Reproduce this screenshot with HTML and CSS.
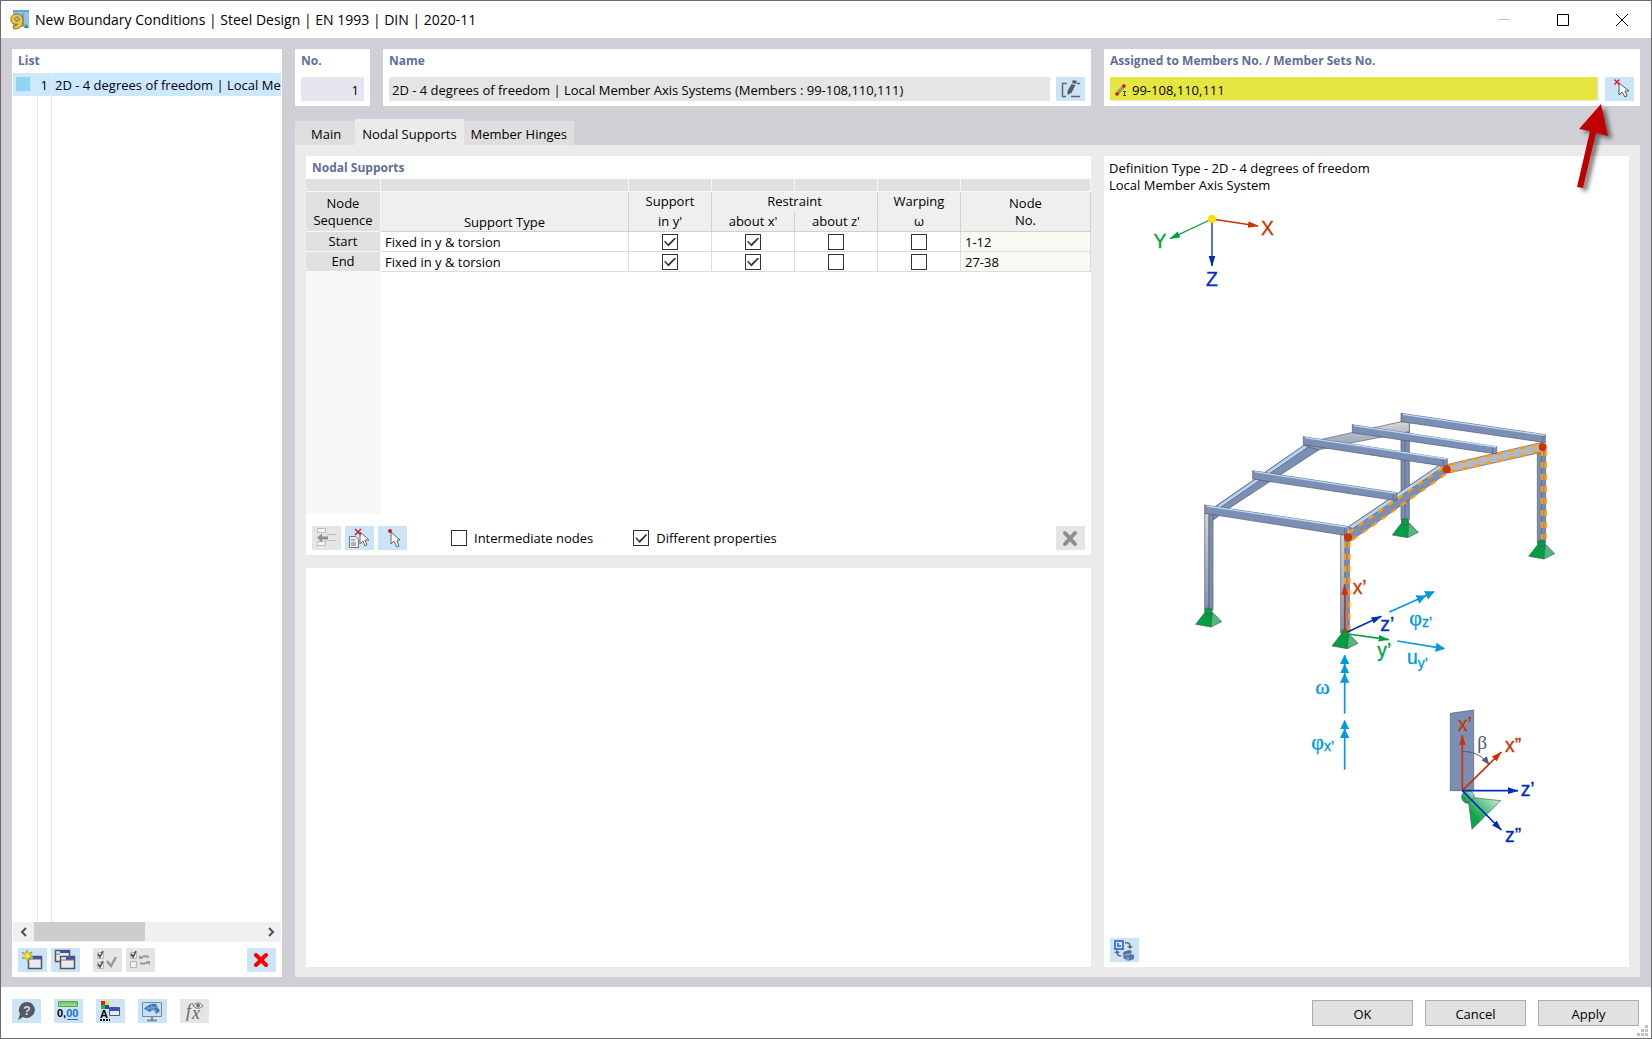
FILE: index.html
```html
<!DOCTYPE html>
<html lang="en">
<head>
<meta charset="utf-8">
<meta name="viewport" content="width=device-width, initial-scale=1">
<title>New Boundary Conditions</title>
<link rel="stylesheet" href="styles.css">
</head>
<body>
<div class="dialog">
  <header class="titlebar">
    <svg class="app-icon" viewBox="0 0 20 20" width="20" height="20" aria-hidden="true">
      <rect x="3" y="0" width="16" height="17" fill="#8fc1e6"/>
      <path d="M3 1h16M13 3v13" stroke="#6ba3cf" stroke-width="2"/>
      <path d="M14 18l2-4 3 4z" fill="#2f9560"/>
      <path fill-rule="evenodd" d="M7 4c4 0 6 3 6 7 0 5-3 8-9 8l-1-3c3 0 4-1 5-2-4 1-8-1-7-5 0-3 2-5 6-5zM7 7c-3 0-3 4 0 4s3-4 0-4z" fill="#f1c62c" stroke="#85702c"/>
    </svg>
    <h1 class="title">New Boundary Conditions | Steel Design | EN 1993 | DIN | 2020-11</h1>
    <button class="caption" aria-label="Minimize" disabled><svg viewBox="0 0 12 12" width="12" height="12"><path d="M0 5.500h12" stroke="#c4c4c4"/></svg></button>
    <button class="caption" aria-label="Maximize"><svg viewBox="0 0 12 12" width="12" height="12"><path d="M.5.5h11v11H.5z" fill="none" stroke="#000"/></svg></button>
    <button class="caption" aria-label="Close"><svg viewBox="0 0 12 12" width="12" height="12"><path d="M0 0l12 12M12 0L0 12" stroke="#000"/></svg></button>
  </header>

  <main class="workspace">
    <aside class="panel list-panel">
      <h2 class="heading">List</h2>
      <div class="list">
        <div class="list-row">
          <span class="swatch-cell"><span class="swatch"></span></span>
          <span class="list-no">1</span>
          <span class="list-name">2D - 4 degrees of freedom | Local Member Axis Systems</span>
        </div>
        <div class="list-rest"><span></span><span></span></div>
      </div>
      <div class="scrollbar">
        <button class="scroll-arrow" aria-label="Scroll left"><svg viewBox="0 0 8 10" width="8" height="10"><path d="M6 1L2 5l4 4" fill="none" stroke="#505050" stroke-width="2"/></svg></button>
        <span class="track"><span class="thumb"></span></span>
        <button class="scroll-arrow" aria-label="Scroll right"><svg viewBox="0 0 8 10" width="8" height="10"><path d="M2 1l4 4-4 4" fill="none" stroke="#505050" stroke-width="2"/></svg></button>
      </div>
      <div class="list-tools">
        <button class="tool" aria-label="New">
          <svg viewBox="0 0 29 24" width="29" height="24"><path d="M10.500 8.500h13v12h-13z" fill="#e9e9f2" stroke="#55555c" stroke-width="1.500"/><path d="M15 8h8v3h-8z" fill="#3a4fc0"/><path d="M10 11h13" stroke="#666"/><path d="M9 2l1.500 3.500L14 4l-2 3 3 2-4 .5L10 14 8.500 10 4 10.500 7 7.500 4 4.500l4 1z" fill="#ffee22" stroke="#8a8230" stroke-width=".7"/></svg>
        </button>
        <button class="tool" aria-label="Duplicate">
          <svg viewBox="0 0 29 24" width="29" height="24"><g stroke="#55555c" stroke-width="1.500" fill="#e9e9f2"><path d="M4.500 2.500h14v11h-14z"/><path d="M9.500 8.500h14v12h-14z"/></g><path d="M9 3h9v2H9zM15 9h8v3h-8z" fill="#3a4fc0"/><path d="M5 6h4M10 12h13" stroke="#777"/></svg>
        </button>
        <button class="tool off gap" aria-label="Check all" disabled>
          <svg viewBox="0 0 29 24" width="29" height="24"><g fill="#f0f0f0" stroke="#b5b5b5"><path d="M4.500 4.500h6v6h-6zM4.500 14.500h6v6h-6z"/></g><path d="M5 6l2 3 3-6M5 16l2 3 3-6" fill="none" stroke="#444" stroke-width="1.500"/><path d="M14 13l4 5 5-9" fill="none" stroke="#999" stroke-width="2.500"/></svg>
        </button>
        <button class="tool off" aria-label="Invert selection" disabled>
          <svg viewBox="0 0 29 24" width="29" height="24"><g fill="#f0f0f0" stroke="#b5b5b5"><path d="M4.500 4.500h6v6h-6zM4.500 13.500h6v6h-6z"/></g><path d="M5 6l2 3 3-6" fill="none" stroke="#444" stroke-width="1.500"/><path d="M14 10c3-2 6-2 9-1M23 14c-3 2-6 2-9 1" fill="none" stroke="#999" stroke-width="2"/><path d="M13 7v4h4zM24 17v-4h-4z" fill="#999"/></svg>
        </button>
        <button class="tool end" aria-label="Delete">
          <svg viewBox="0 0 29 24" width="29" height="24"><path d="M9 7l10 10M19 7L9 17" stroke="#f00" stroke-width="4" stroke-linecap="round"/></svg>
        </button>
      </div>
    </aside>

    <section class="details">
      <div class="fields">
        <div class="panel field">
          <label class="heading" for="no">No.</label>
          <input class="input no-input" id="no" value="1" readonly>
        </div>
        <div class="panel field">
          <label class="heading" for="name">Name</label>
          <div class="field-row">
            <input class="input name-input" id="name" value="2D - 4 degrees of freedom | Local Member Axis Systems (Members : 99-108,110,111)" readonly>
            <button class="tool" aria-label="Edit name">
              <svg viewBox="0 0 29 24" width="29" height="24"><path d="M11 6.500H6.500v13H10M21 6.500h3M15 19.500h9" fill="none" stroke="#666" stroke-width="1.500"/><path d="M17 3l4 1-1 3-4-1zM15.500 7l4 1-4 8-4 2 0-4z" fill="#5a5e63"/></svg>
            </button>
          </div>
        </div>
        <div class="panel field assigned">
          <label class="heading" for="members">Assigned to Members No. / Member Sets No.</label>
          <div class="field-row">
            <div class="member-box">
              <svg viewBox="0 0 12 12" width="12" height="12" aria-hidden="true"><path d="M2 10l7-8" stroke="#9aa060" stroke-width="3.500"/><circle cx="2" cy="10" r="1.800" fill="#d41111"/><circle cx="9" cy="2" r="1.800" fill="#d41111"/><path d="M8 7.500h3M9.500 7.500v4M8 11.500h3" stroke="#444"/></svg>
              <input class="member-input" id="members" value="99-108,110,111">
            </div>
            <button class="tool" aria-label="Select members">
              <svg viewBox="0 0 29 24" width="29" height="24"><path d="M14 6v12l3-3 3 5 2-1-2-5h4z" fill="#fff" stroke="#555"/><path d="M9.500 2.500l5 5M14.500 2.500l-5 5" stroke="#d81a2a" stroke-width="1.500"/></svg>
            </button>
          </div>
          <svg class="callout" viewBox="0 0 48 100" width="48" height="100" aria-hidden="true"><path d="M31 5l7 32-12-3-13 55-6-1 13-56-11-2z" fill="#c00000"/></svg>
        </div>
      </div>

      <nav class="tabs">
        <button class="tab tab-main">Main</button>
        <button class="tab active">Nodal Supports</button>
        <button class="tab">Member Hinges</button>
      </nav>

      <div class="page">
        <div class="page-left">
          <section class="panel supports">
            <h2 class="heading">Nodal Supports</h2>
            <table class="grid">
              <colgroup><col class="c-seq"><col class="c-type"><col class="c-chk"><col class="c-chk"><col class="c-chk"><col class="c-chk"><col></colgroup>
              <thead>
                <tr class="strip"><td></td><td></td><td></td><td></td><td></td><td></td><td></td></tr>
                <tr>
                  <th class="seq" rowspan="2">Node<br>Sequence</th>
                  <th class="low" rowspan="2">Support Type</th>
                  <th class="upper">Support</th>
                  <th class="upper" colspan="2">Restraint</th>
                  <th class="upper">Warping</th>
                  <th rowspan="2">Node<br>No.</th>
                </tr>
                <tr><th>in y'</th><th>about x'</th><th>about z'</th><th>ω</th></tr>
              </thead>
              <tbody>
                <tr>
                  <th class="seq">Start</th><td class="type">Fixed in y &amp; torsion</td>
                  <td><input type="checkbox" class="check" aria-label="Start, support in y'" checked></td>
                  <td><input type="checkbox" class="check" aria-label="Start, restraint about x'" checked></td>
                  <td><input type="checkbox" class="check" aria-label="Start, restraint about z'"></td>
                  <td><input type="checkbox" class="check" aria-label="Start, warping"></td>
                  <td class="nodes">1-12</td>
                </tr>
                <tr>
                  <th class="seq">End</th><td class="type">Fixed in y &amp; torsion</td>
                  <td><input type="checkbox" class="check" aria-label="End, support in y'" checked></td>
                  <td><input type="checkbox" class="check" aria-label="End, restraint about x'" checked></td>
                  <td><input type="checkbox" class="check" aria-label="End, restraint about z'"></td>
                  <td><input type="checkbox" class="check" aria-label="End, warping"></td>
                  <td class="nodes">27-38</td>
                </tr>
              </tbody>
            </table>
            <div class="gutter"></div>
            <div class="support-tools">
              <button class="tool off" aria-label="Insert row" disabled>
                <svg viewBox="0 0 29 24" width="29" height="24"><g fill="#f7f7f7" stroke="#bbb"><path d="M5.500 2.500h8v4h-8zM5.500 15.500h8v4h-8z"/><path d="M15 8.500h9M15 14.500h9"/></g><path d="M5 11.500l5-4v3h6v3h-6v3z" fill="#909090"/></svg>
              </button>
              <button class="tool" aria-label="Pick from list">
                <svg viewBox="0 0 29 24" width="29" height="24"><path d="M4.500 10.500h6l3 3v8h-9z" fill="#eee" stroke="#777"/><path d="M6 14h4M6 17h5M6 19h5" stroke="#777"/><path d="M15 6v12l3-3 2 5 2-1-2-5h4z" fill="#fff" stroke="#666"/><path d="M10 3l6 6M16 3l-6 6" stroke="#d81a2a" stroke-width="1.500"/></svg>
              </button>
              <button class="tool" aria-label="Pick node">
                <svg viewBox="0 0 29 24" width="29" height="24"><path d="M13 6v12l3-3 3 6 2-1-2-6h3z" fill="#fff" stroke="#666"/><circle cx="12" cy="5" r="2" fill="#e01020"/></svg>
              </button>
              <div class="options">
                <label class="option"><input type="checkbox" class="check">Intermediate nodes</label>
                <label class="option"><input type="checkbox" class="check" checked>Different properties</label>
              </div>
              <button class="tool off end" aria-label="Delete row" disabled>
                <svg viewBox="0 0 29 24" width="29" height="24"><path d="M9 7l10 11M19 7L9 18" stroke="#8f8f8f" stroke-width="4" stroke-linecap="round"/></svg>
              </button>
            </div>
          </section>
          <section class="panel"></section>
        </div>

        <section class="panel preview">
          <p class="caption-text">Definition Type - 2D - 4 degrees of freedom<br>Local Member Axis System</p>
          <svg class="drawing" viewBox="0 0 1575 2190" role="img" aria-label="Frame with local member axes">
            <defs>
              <marker id="red" markerUnits="userSpaceOnUse" markerWidth="34" markerHeight="22" refX="30" refY="10" orient="auto"><path d="M0 0l32 10-32 10z" fill="#cc3300"/></marker>
              <marker id="green" markerUnits="userSpaceOnUse" markerWidth="34" markerHeight="22" refX="30" refY="10" orient="auto"><path d="M0 0l32 10-32 10z" fill="#00a040"/></marker>
              <marker id="navy" markerUnits="userSpaceOnUse" markerWidth="34" markerHeight="22" refX="30" refY="10" orient="auto"><path d="M0 0l32 10-32 10z" fill="#0030b8"/></marker>
              <marker id="sky" markerUnits="userSpaceOnUse" markerWidth="32" markerHeight="30" refX="26" refY="14" orient="auto"><path d="M0 0l28 14-28 14z" fill="#0099e0"/></marker>
              <marker id="slate" markerUnits="userSpaceOnUse" markerWidth="28" markerHeight="22" refX="22" refY="10" orient="auto"><path d="M0 0l26 10-26 10z" fill="#5a5a6c"/></marker>
              <linearGradient id="steel" x1="0" y1="0" x2="0" y2="1"><stop offset="0" stop-color="#d6d6d6"/><stop offset="1" stop-color="#8593b3"/></linearGradient>
              <linearGradient id="mint" x1="1" y1="0" x2="0" y2="1"><stop offset="0" stop-color="#d4f0dd"/><stop offset=".7" stop-color="#10a54a"/></linearGradient>
              <g id="foot" stroke="#4c5960" stroke-width="2">
                <path d="M-11 4l-27 35 46 8 4-43z" fill="#00a040"/>
                <path d="M12 4L8 47l32-16L14 4z" fill="#4dbb7b"/>
                <circle r="11" fill="#00a040"/>
              </g>
            </defs>

            <!-- global axes -->
            <g fill="none" stroke-width="4">
              <path d="M324 57L462 78" stroke="#cc3300" marker-end="url(#red)"/>
              <path d="M324 57L198 116" stroke="#00a040" marker-end="url(#green)"/>
              <path d="M324 57V198" stroke="#0030b8" marker-end="url(#navy)"/>
            </g>
            <circle cx="324" cy="57" r="12" fill="#ffdd00"/>
            <g class="axis-text">
              <text x="490" y="105" text-anchor="middle" class="red">X</text>
              <text x="168" y="144" text-anchor="middle" class="green">Y</text>
              <text x="324" y="258" text-anchor="middle" class="navy">Z</text>
            </g>

            <!-- steel frame -->
            <g transform="translate(228 570)">
              <g stroke="#55586b" stroke-width="2" stroke-linejoin="round" fill="#7b8fb5">
                <path d="M663 95h25v295h-25z"/><path d="M675 120v270"/>
                <path d="M380 158L663 95h25v30l-165 32-143 30z" fill="url(#steel)"/>
                <path d="M102 352L372 166l44 14-266 173-50 37z"/>
                <path d="M104 352L372 166l14 4L122 352z" fill="#b4d4f2"/>
                <path d="M74 370h13v290H74z" fill="url(#steel)"/><path d="M87 374h12v286H87z"/>
                <path d="M1072 175h25v283h-25z"/><path d="M1085 180v278"/>
                <path d="M482 432h13v296h-13z" fill="url(#steel)"/><path d="M495 436h13v292h-13z"/>
                <path d="M506 410L778 226l22 24-290 204z"/>
                <path d="M506 410L778 226l10 6L518 416z" fill="#b4d4f2"/>
                <path d="M796 225l290-68 6 28-286 64z" fill="#b5b8c0"/>
              </g>
              <g stroke="#55586b" stroke-width="2" stroke-linejoin="round" fill="#7b8fb5">
                <path d="M663 70l433 64v24L663 95z"/>
                <path d="M517 104l433 66v22L517 128z"/>
                <path d="M370 140l432 66v24L370 164z"/>
                <path d="M218 242l432 66v24L218 267z"/>
                <path d="M74 345l428 64v28L74 370z"/>
                <path d="M1088 137v22M938 173v18M790 208v21M640 311v20M494 413v22"/>
              </g>
              <g stroke="#b9daf7" stroke-width="4">
                <path d="M668 73l426 63M522 107l426 64M375 143l425 64M223 245l425 65M80 348l420 63"/>
              </g>
              <g fill="none" stroke="#ff9a0a" stroke-width="7" stroke-dasharray="18 18">
                <path d="M495 455v130M508 455v270M506 428l286-198M516 450l284-200M810 225l270-64M812 245l276-63M1086 180v280M1097 180v265"/>
              </g>
              <g fill="#cc3300"><circle cx="504" cy="442" r="12"/><circle cx="800" cy="238" r="12"/><circle cx="1088" cy="171" r="12"/></g>
              <use href="#foot" x="85" y="664"/><use href="#foot" x="494" y="729"/><use href="#foot" x="675" y="396"/><use href="#foot" x="1084" y="460"/>
            </g>

            <!-- local axes and degrees of freedom -->
            <g transform="translate(528 1080)">
              <g fill="none" stroke-width="5">
                <path d="M194 219V74" stroke="#cc3300" marker-end="url(#red)"/>
                <path d="M204 215L304 169" stroke="#0030b8" marker-end="url(#navy)"/>
                <path d="M204 222L326 239" stroke="#00a040" marker-end="url(#green)"/>
                <g stroke="#0099e0">
                  <path d="M328 156L436 108" marker-end="url(#sky)"/><path d="M420 114L462 95" marker-end="url(#sky)"/>
                  <path d="M352 243L493 266" marker-end="url(#sky)"/>
                  <path d="M194 461V342" marker-end="url(#sky)"/><path d="M194 350V314" marker-end="url(#sky)"/><path d="M194 330V286" marker-end="url(#sky)"/>
                  <path d="M194 629V508" marker-end="url(#sky)"/><path d="M194 520V482" marker-end="url(#sky)"/>
                </g>
              </g>
              <g class="axis-text">
                <text x="218" y="103" class="red">x’</text>
                <text x="301" y="213" class="navy">z’</text>
                <text x="292" y="291" class="green">y’</text>
                <text x="381" y="313" class="sky">u<tspan class="sub" dy="10">y’</tspan></text>
                <text x="388" y="196" class="sky"><tspan class="greek">φ</tspan><tspan class="sub" dy="6">z’</tspan></text>
                <text x="106" y="402" class="sky greek">ω</text>
                <text x="94" y="566" class="sky"><tspan class="greek">φ</tspan><tspan class="sub" dy="8">x’</tspan></text>
              </g>

              <!-- rotated support detail -->
              <path d="M511 460l70-10v242h-70z" fill="#7b8fb5" stroke="#55586b" stroke-width="2"/>
              <circle cx="564" cy="711" r="19" fill="url(#mint)" stroke="#4c5960" stroke-width="2"/>
              <path d="M582 713l80 9-86 86-10-80z" fill="url(#mint)" stroke="#4c5960" stroke-width="2"/>
              <path d="M548 574c30 0 58 12 78 38" fill="none" stroke="#5a5a6c" stroke-width="3" marker-end="url(#slate)"/>
              <g fill="none" stroke-width="5">
                <path d="M547 692V526" stroke="#cc3300" marker-end="url(#red)"/>
                <path d="M547 692L664 576" stroke="#cc3300" marker-end="url(#red)"/>
                <path d="M547 692H714" stroke="#0030b8" marker-end="url(#navy)"/>
                <path d="M547 692L664 810" stroke="#0030b8" marker-end="url(#navy)"/>
              </g>
              <g class="axis-text">
                <text x="534" y="514" class="red">x’</text>
                <text x="675" y="577" class="red">x”</text>
                <text x="722" y="709" class="navy">z’</text>
                <text x="675" y="846" class="navy">z”</text>
                <text x="592" y="567" class="slate beta">β</text>
              </g>
            </g>
          </svg>
          <button class="tool preview-tool" aria-label="Switch view">
            <svg viewBox="0 0 29 24" width="29" height="24"><path d="M5 3h8v8H5z" fill="#dce8ff" stroke="#4a78e0" stroke-width="2"/><path d="M7 5h2v2h2v2H7z" fill="#4a78e0"/><path d="M15 5c4-1 5 1 5 4M7 14c0 3 2 4 4 4" fill="none" stroke="#666" stroke-width="1.500"/><path d="M17 8h6l-3 3zM4 15h6l-3-3z" fill="#666"/><path d="M13 14l6-2 3 1-1 3 3 1v4l-6 2-5-3z" fill="#5473a8"/><path d="M13 14v6l5 3v-4M15 17l6-1" stroke="#a8c2e6" fill="none"/></svg>
          </button>
        </section>
      </div>
    </section>
  </main>

  <footer class="footer">
    <button class="tool" aria-label="Help">
      <svg viewBox="0 0 29 24" width="29" height="24"><path d="M15 3a8 8 0 11-4 15l-5 3 2-6A8 8 0 0115 3z" fill="#55595e"/><text x="15" y="16" text-anchor="middle" class="ic-help">?</text></svg>
    </button>
    <button class="tool" aria-label="Units and decimals">
      <svg viewBox="0 0 29 24" width="29" height="24"><path d="M4.500 2.500h19v5h-19z" fill="#8cdc86" stroke="#5aa457"/><path d="M7 3v2M10 3v2M13 3v2M16 3v2M19 3v2M22 3v2" stroke="#5aa457"/><text x="3" y="18" class="ic-num">0,<tspan class="ic-decimals">00</tspan></text><path d="M13 20.500h11" stroke="#2468d8"/></svg>
    </button>
    <button class="tool" aria-label="Display settings">
      <svg viewBox="0 0 29 24" width="29" height="24"><path d="M5 2h4v4H5z" fill="#e02020"/><path d="M9 2h4v4H9z" fill="#f6e020"/><path d="M5 6h4v4H5z" fill="#20c030"/><path d="M9 6h4v4H9z" fill="#2040e0"/><text x="4" y="19" class="ic-num">A</text><path d="M4 21h10" stroke="#111" stroke-width="2" stroke-dasharray="2 1"/><path d="M13.500 8.500h10v8h-10z" fill="#e9e9f2" stroke="#555"/><path d="M14 9h9v3h-9z" fill="#3a4fc0"/></svg>
    </button>
    <button class="tool" aria-label="Graphic display">
      <svg viewBox="0 0 29 24" width="29" height="24"><path d="M4.500 3.500h19v14h-19z" fill="#c6dff4" stroke="#7c8790"/><path d="M14 18v3M9 21.500h10" stroke="#7c8790" stroke-width="2"/><path d="M6 10c3-4 8-6 12-5l4 7-4 3c-1-4-3-5-6-2z" fill="#3f78b8"/><path d="M9 8l6 3M13 6l5 7M8 11c4-3 8-4 12-2" stroke="#7fb0dc" fill="none"/></svg>
    </button>
    <button class="tool off" aria-label="Formula" disabled>
      <svg viewBox="0 0 29 24" width="29" height="24"><text x="6" y="18" class="ic-fx">f</text><text x="12" y="20" class="ic-fx">x</text><path d="M13 7c3-4 7-4 10 0-3 3-7 3-10 0z" fill="#eee" stroke="#777"/><circle cx="18" cy="6.500" r="2" fill="#777"/></svg>
    </button>
    <div class="actions">
      <button class="action">OK</button>
      <button class="action">Cancel</button>
      <button class="action">Apply</button>
    </div>
    <svg class="grip" viewBox="0 0 11 11" width="11" height="11" aria-hidden="true"><path d="M8 0h3v3H8zM4 4h3v3H4zM8 4h3v3H8zM0 8h3v3H0zM4 8h3v3H4zM8 8h3v3H8z" fill="#bfbfbf"/></svg>
  </footer>
</div>
</body>
</html>
```
FILE: styles.css
```css
* {
  box-sizing: border-box;
}

body {
  margin: 0;
  font-family: "Open Sans", "Noto Sans", "Liberation Sans", sans-serif;
  font-size: 13px;
  line-height: 17px;
  color: #000;
}

button,
input {
  font: inherit;
  color: inherit;
  margin: 0;
  padding: 0;
  border: 0;
  border-radius: 0;
  background: none;
}

h1,
h2,
p {
  margin: 0;
}

svg {
  display: block;
}

.dialog {
  display: flex;
  flex-direction: column;
  min-height: 100vh;
  border: 1px solid #6b6b6b;
  background: #fff;
}

/* title bar */
.titlebar {
  display: flex;
  align-items: center;
  height: 37px;
  padding-left: 9px;
}

.title {
  flex: 1;
  margin-left: 5px;
  font-size: 14px;
  font-weight: 400;
}

.caption {
  display: flex;
  align-items: center;
  justify-content: center;
  width: 59px;
  height: 35px;
}

/* main area */
.workspace {
  flex: 1;
  display: grid;
  grid-template-columns: 270px minmax(0, 1fr);
  gap: 13px;
  padding: 11px 11px 10px;
  background: #d0cfd5;
}

.panel {
  background: #fff;
}

.heading {
  display: block;
  padding: 3px 6px;
  font-size: 12px;
  font-weight: 700;
  color: #5f6f96;
}

.tool {
  display: block;
  flex: none;
  width: 29px;
  height: 24px;
  background: #cce4f7;
}

.tool.off {
  background: #e5e5e5;
}

.tool.end {
  margin-left: auto;
}

/* list */
.list-panel {
  display: flex;
  flex-direction: column;
}

.list {
  flex: 1;
  display: flex;
  flex-direction: column;
  margin: 1px 1px 0;
}

.list-row {
  display: flex;
  height: 23px;
  line-height: 24px;
  background: #cce8ff;
}

.swatch-cell {
  flex: none;
  width: 25px;
  padding: 4px 3px;
  border-right: 1px solid #e8e8e8;
}

.swatch {
  display: block;
  width: 14px;
  height: 14px;
  background: #8ed5f4;
}

.list-no {
  flex: none;
  width: 14px;
  padding-right: 3px;
  text-align: right;
  border-right: 1px solid #e8e8e8;
}

.list-name {
  padding-left: 3px;
  white-space: nowrap;
  overflow: hidden;
}

.list-rest {
  flex: 1;
  display: flex;
}

.list-rest span {
  width: 25px;
  border-right: 1px solid #e8e8e8;
}

.list-rest span + span {
  width: 14px;
}

.scrollbar {
  display: flex;
  height: 20px;
  margin: 0 1px;
  background: #f0f0f0;
}

.scroll-arrow {
  display: flex;
  align-items: center;
  justify-content: center;
  width: 21px;
}

.track {
  flex: 1;
}

.thumb {
  display: block;
  width: 49%;
  height: 19px;
  background: #cdcdcd;
}

.list-tools {
  display: flex;
  gap: 4px;
  padding: 6px 6px 5px;
}

.list-tools .gap {
  margin-left: 9px;
}

/* header fields */
.details {
  display: flex;
  flex-direction: column;
}

.fields {
  display: grid;
  grid-template-columns: 75px minmax(0, 1fr) 536px;
  gap: 13px;
}

.field {
  height: 57px;
}

.input {
  height: 24px;
  padding: 2px 3px 0;
}

.no-input {
  display: block;
  width: 63px;
  margin: 5px 0 0 6px;
  padding-right: 5px;
  text-align: right;
  background: #e6e6f0;
}

.field-row {
  display: flex;
  gap: 6px;
  padding: 5px 6px 0;
}

.name-input {
  flex: 1;
  min-width: 0;
  background: #e5e5e5;
}

.assigned {
  position: relative;
}

.member-box {
  flex: 1;
  display: flex;
  align-items: center;
  gap: 5px;
  height: 24px;
  padding: 3px 5px 0;
  border-right: 2px solid #e6e6f0;
  border-bottom: 1px solid #e6e6f0;
  background: #e6e640;
}

.member-input {
  flex: 1;
}

.callout {
  position: absolute;
  top: 50px;
  right: 22px;
  z-index: 1;
  overflow: visible;
  filter: drop-shadow(4px 3px 2px rgba(0, 0, 0, 0.5));
}

/* tabs */
.tabs {
  display: flex;
  align-items: flex-end;
  height: 26px;
  margin-top: 13px;
}

.tab {
  height: 24px;
  padding: 2px 7px 0;
  background: #dedede;
}

.tab-main {
  padding: 2px 14px 0 16px;
}

.tab.active {
  height: 26px;
  padding-top: 4px;
  background: #ebebeb;
}

.page {
  flex: 1;
  display: grid;
  grid-template-columns: minmax(0, 1fr) 525px;
  gap: 13px;
  padding: 11px 11px 10px;
  background: #ebebeb;
}

.page-left {
  display: grid;
  grid-template-rows: 1fr 1fr;
  gap: 13px;
}

/* supports table */
.supports {
  display: flex;
  flex-direction: column;
}

.grid {
  width: 100%;
  table-layout: fixed;
  border-collapse: separate;
  border-spacing: 0;
}

.c-seq {
  width: 75px;
}

.c-type {
  width: 248px;
}

.c-chk {
  width: 83px;
}

.grid th,
.grid td {
  height: 20px;
  padding: 0;
  font-weight: 400;
  text-align: center;
  border-right: 1px solid #dcdcdc;
  border-bottom: 1px solid #dcdcdc;
}

.grid thead th {
  background: #efefef;
  border-color: #d0d0d0;
}

.grid .strip td {
  height: 13px;
  background: #e0e0e0;
  border-color: #f8f8f8;
}

.grid thead .upper {
  border-bottom-color: #efefef;
}

.grid .low {
  vertical-align: bottom;
}

.grid .seq {
  background: #e0e0e0;
  border-color: #f8f8f8;
}

.grid .type,
.grid .nodes {
  padding: 2px 0 0 4px;
  text-align: left;
}

.grid .nodes {
  background: #f8f9f3;
}

.check {
  appearance: none;
  display: block;
  width: 16px;
  height: 16px;
  border: 1px solid #333;
  background: #fff;
}

.grid .check {
  margin: 0 auto;
}

.check:checked::before {
  content: "";
  display: block;
  width: 12px;
  height: 9px;
  margin: 3px 1px;
  background: #333;
  clip-path: polygon(0 45%, 10% 35%, 35% 72%, 90% 0, 100% 10%, 37% 100%);
}

.gutter {
  flex: 1;
  width: 75px;
  background: #f7f7f7;
}

.support-tools {
  display: flex;
  align-items: center;
  gap: 4px;
  padding: 12px 6px 5px;
}

.options {
  display: flex;
  gap: 40px;
  margin-left: 40px;
}

.option {
  display: flex;
  align-items: center;
  gap: 7px;
}

/* preview */
.preview {
  display: flex;
  flex-direction: column;
}

.caption-text {
  padding: 4px 5px 6px;
}

.drawing {
  width: 100%;
  font-family: "Liberation Sans", Arial, sans-serif;
}

.preview-tool {
  margin: auto 0 5px 6px;
}

.axis-text {
  font-size: 58px;
}

.sub {
  font-size: 42px;
}

.greek {
  font-family: "Liberation Serif", "Times New Roman", serif;
  font-size: 66px;
}

.beta {
  font-family: "Liberation Serif", "Times New Roman", serif;
}

.red {
  fill: #cc3300;
  stroke: #cc3300;
}

.green {
  fill: #00a040;
  stroke: #00a040;
}

.navy {
  fill: #0030b8;
  stroke: #0030b8;
}

.sky {
  fill: #0099e0;
  stroke: #0099e0;
}

.slate {
  fill: #5a5a6c;
}

/* footer */
.footer {
  position: relative;
  display: flex;
  gap: 13px;
  height: 51px;
  padding: 12px 12px 0 11px;
}

.actions {
  display: flex;
  gap: 12px;
  margin-left: auto;
}

.action {
  width: 101px;
  height: 26px;
  margin-top: 1px;
  padding-top: 2px;
  border: 1px solid #adadad;
  background: #e1e1e1;
}

.grip {
  position: absolute;
  right: 3px;
  bottom: 2px;
}

.ic-help {
  font: bold 12px "Liberation Sans", sans-serif;
  fill: #cce4f7;
}

.ic-num {
  font: bold 11px "Liberation Sans", sans-serif;
}

.ic-decimals {
  fill: #2468d8;
}

.ic-fx {
  font: italic 18px "Liberation Serif", serif;
  fill: #666;
}
```
